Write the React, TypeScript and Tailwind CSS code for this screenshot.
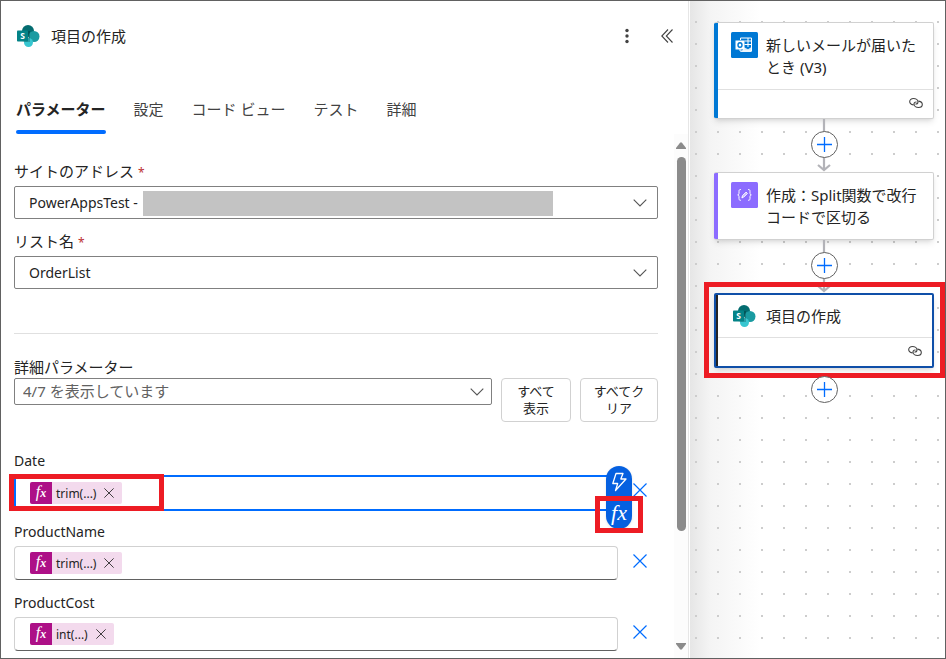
import React, { useState } from 'react';

const TABS = ['パラメーター', '設定', 'コード ビュー', 'テスト', '詳細'];

const SharePointIcon: React.FC = () => (
  <svg className="w-6 h-6 shrink-0" viewBox="0 0 24 24">
    <circle cx="12" cy="7" r="6" fill="#036c70" />
    <circle cx="18" cy="12.500" r="5.500" fill="#1a9ba1" />
    <circle cx="12.500" cy="18.500" r="4.500" fill="#37c6d0" />
    <path d="M7 7h7v11H8.200A6 6 0 0 1 7 7z" fill="#000" fillOpacity="0.200" />
    <rect x="1" y="6.500" width="11" height="11" rx="0.800" fill="#038387" />
    <text x="6.500" y="15" textAnchor="middle" fontSize="8.500" fontWeight="700" fill="#fff" fontFamily="Noto Sans, sans-serif">S</text>
  </svg>
);

const OutlookIcon: React.FC = () => (
  <svg className="w-[27px] h-[26px] shrink-0" viewBox="0 0 27 26">
    <rect width="27" height="26" rx="1.500" fill="#0078d4" />
    <path d="M9.500 8V6h11v13H9v-2M20.500 9H13.500M20.500 12.500h-7M17 6v9" fill="none" stroke="#fff" strokeWidth="1" />
    <path d="M12 15.500h1.500l3.500 1.800 3.500-2.300V20H9l3-2z" fill="#fff" fillOpacity="0.850" />
    <rect x="4.500" y="8.500" width="9" height="9" fill="#fff" />
    <ellipse cx="9" cy="13" rx="2" ry="2.300" fill="none" stroke="#0078d4" strokeWidth="1.400" />
  </svg>
);

const ComposeIcon: React.FC = () => (
  <svg className="w-[27px] h-[26px] shrink-0" viewBox="0 0 27 26" fill="none">
    <rect width="27" height="26" rx="1.500" fill="#8c6cff" />
    <g stroke="#fff" strokeWidth="1" strokeLinecap="round" strokeLinejoin="round">
      <path d="M9.500 7.500C8 7.500 8 8.300 8 9.300v2c0 1-.5 1.500-1.300 1.600.8.100 1.300.6 1.300 1.600v2c0 1 0 1.800 1.500 1.800" />
      <path d="M17.500 7.500c1.500 0 1.500.8 1.500 1.800v2c0 1 .5 1.500 1.300 1.600-.8.100-1.300.6-1.300 1.600v2c0 1 0 1.800-1.500 1.800" />
      <path d="M11 15.500l.5-1.800 3.600-3.600 1.300 1.300-3.600 3.600z" fill="#fff" fillOpacity="0.500" />
    </g>
  </svg>
);

const LinkIcon: React.FC = () => (
  <svg className="w-[14px] h-3" viewBox="0 0 14 12" fill="none" stroke="#444" strokeWidth="1.100" strokeLinecap="round">
    <path d="M4.300 7.900C2.200 7.500.7 6.200.7 4.500.7 2.700 2.300 1.500 4.400 1.500c2.500 0 4.600 1.500 4.600 3.500 0 1.200-.9 2-2.200 2" />
    <path d="M9.700 4.100c2.100.4 3.600 1.700 3.600 3.400 0 1.800-1.600 3-3.700 3C7.100 10.500 5 9 5 7c0-1.200.9-2 2.200-2" />
  </svg>
);

const CrossIcon: React.FC<{ className: string }> = ({ className }) => (
  <svg className={className} viewBox="0 0 14 14" fill="none" stroke="currentColor" strokeWidth="1.200">
    <path d="M0.500 0.500l13 13M13.500 0.500l-13 13" />
  </svg>
);

interface SelectFieldProps {
  id: string;
  value: string;
  className: string;
  chevronClassName?: string;
}

const SelectField: React.FC<SelectFieldProps> = ({ id, value, className, chevronClassName = 'right-[11px]' }) => (
  <>
    <select id={id} className={`w-full appearance-none rounded-[2px] border border-[#808080] bg-white ${className}`}>
      <option>{value}</option>
    </select>
    <svg className={`absolute top-1/2 -translate-y-1/2 w-[14px] h-2 pointer-events-none ${chevronClassName}`} viewBox="0 0 14 8" fill="none" stroke="#555" strokeWidth="1.100">
      <path d="M0.700 0.700L7 7l6.300-6.300" />
    </svg>
  </>
);

interface TokenFieldProps {
  id: string;
  label: string;
  token: string;
  active?: boolean;
}

const TokenField: React.FC<TokenFieldProps> = ({ id, label, token, active }) => (
  <div className="mb-[11px] last:mb-0">
    <label htmlFor={id} className="block text-sm leading-5 mb-1">{label}</label>
    <div className="h-9 flex items-start">
      <div
        className={`relative flex-1 flex items-center bg-white ${
          active ? 'h-9 pl-[14px] border-2 border-[#006cff]' : 'h-[34px] pl-[15px] border border-[#d1d1d1] border-b-[#616161] rounded'
        }`}
      >
        <span className="flex items-center h-[22px] rounded-[2px] bg-[#f3daed] text-xs shrink-0 overflow-hidden">
          <span className="w-[22px] h-full bg-[#ad1087] text-white text-center font-['Liberation_Serif',serif] italic text-base leading-5">
            f<span className="text-xs font-bold">x</span>
          </span>
          <span className="pl-1 pr-2 pt-[2px]">{token}</span>
          <button aria-label={`${token} を削除`} className="mr-2"><CrossIcon className="w-[10px] h-[10px]" /></button>
        </span>
        <input id={id} type="text" className="flex-1 min-w-0 h-full outline-none" />

        {active && (
          <>
            <div className="absolute -left-[7px] -top-[3px] w-[155px] h-[37px] border-[5px] border-[#ed1c24] pointer-events-none" />
            {/* Dynamic content / expression switcher */}
            <div className="absolute -right-4 -top-[11px] w-[26px] h-[63px] rounded-full bg-[#0560e0] text-white shadow flex flex-col z-10">
              <button aria-label="動的なコンテンツ" className="h-[31px] flex items-center justify-center">
                <svg className="w-4 h-5" viewBox="0 0 16 20" fill="none" stroke="#fff" strokeWidth="1.300" strokeLinejoin="round">
                  <path d="M5 1.500h7L9.800 7H15L4.500 18.500 6.700 11.500H1.800z" />
                </svg>
              </button>
              <button aria-label="式" className="h-8 font-['Liberation_Serif',serif] italic text-[22px] leading-8">fx</button>
              <div className="absolute -left-[11px] top-[30px] w-12 h-[37px] border-[5px] border-[#ed1c24] pointer-events-none" />
            </div>
          </>
        )}
      </div>
      <button aria-label={`${label} をクリア`} className="ml-1 w-9 h-[30px] flex items-center justify-center text-[#006cff]">
        <CrossIcon className="w-[14px] h-[14px]" />
      </button>
    </div>
  </div>
);

const AddButton: React.FC = () => (
  <button aria-label="新しいアクションを追加" className="relative w-[27px] h-[27px] rounded-full border border-[#616161] bg-white flex items-center justify-center">
    <svg className="w-[15px] h-[15px]" viewBox="0 0 15 15" stroke="#006cff" strokeWidth="1.300">
      <path d="M7.500 0v15M0 7.500h15" />
    </svg>
  </button>
);

const Connector: React.FC = () => (
  <div className="relative h-[53px] pt-3 flex items-start justify-center">
    <svg className="absolute left-1/2 -translate-x-1/2 top-0 w-4 h-[53px]" viewBox="0 0 16 53" fill="none" stroke="#b3b3b8" strokeWidth="2.200">
      <path d="M8 0v51M2 46l6 5 6-5" />
    </svg>
    <AddButton />
  </div>
);

interface NodeCardProps {
  icon: React.ReactNode;
  title: string;
  accent: string;
  linked?: boolean;
  selected?: boolean;
}

const NodeCard: React.FC<NodeCardProps> = ({ icon, title, accent, linked, selected }) => (
  <div className={`relative flex rounded-[2px] bg-white overflow-hidden shadow-md ${selected ? 'border-2 border-[#0f4fa8]' : 'border border-l-0 border-[#d1d1d1]'}`}>
    <div className={`shrink-0 ${accent}`} />
    <div className="flex-1">
      <div className={`flex pt-[9px] pr-2 text-[15px] leading-[22px] ${selected ? 'items-center gap-[10px] pl-[14px] pb-[9px]' : 'items-start gap-2 pl-[13px] pb-[11px]'}`}>
        {icon}
        <span className={selected ? '' : 'pt-[2px]'}>{title}</span>
      </div>
      {linked && (
        <div className="h-[29px] border-t border-[#e0e0e0] flex items-center justify-end pr-[10px] pb-[3px]">
          <LinkIcon />
        </div>
      )}
    </div>
  </div>
);

const App: React.FC = () => {
  const [activeTab, setActiveTab] = useState(TABS[0]);

  return (
    <div className="min-h-screen flex border border-[#616161] bg-white text-[#242424] font-['Noto_Sans','Noto_Sans_CJK_JP',sans-serif]">
      {/* Settings panel */}
      <div className="flex-1 min-w-0 flex flex-col border-r border-[#e6e6e6]">
        <header className="h-[70px] flex items-center pl-[15px] pr-[15px]">
          <SharePointIcon />
          <h1 className="flex-1 pl-[11px] text-[15px]">項目の作成</h1>
          <button aria-label="その他" className="w-5 h-6 mr-6 flex items-center justify-center">
            <svg className="w-1 h-4" viewBox="0 0 4 16" fill="#424242">
              <circle cx="2" cy="2.500" r="1.700" />
              <circle cx="2" cy="8" r="1.700" />
              <circle cx="2" cy="13.500" r="1.700" />
            </svg>
          </button>
          <button aria-label="折りたたむ" className="h-6 flex items-center">
            <svg className="w-3 h-[14px]" viewBox="0 0 12 14" fill="none" stroke="#424242" strokeWidth="1.100">
              <path d="M7 0.500L0.800 7 7 13.500M11.500 0.500L5.300 7l6.200 6.500" />
            </svg>
          </button>
        </header>

        <div role="tablist" className="mt-[26px] pl-[15px] flex gap-7">
          {TABS.map(tab => (
            <button
              key={tab}
              role="tab"
              aria-selected={tab === activeTab}
              onClick={() => setActiveTab(tab)}
              className={`flex flex-col text-[15px] leading-6 whitespace-nowrap ${tab === activeTab ? 'font-bold' : 'text-[#424242]'}`}
            >
              {tab}
              <span className={`mt-[9px] h-1 w-full rounded-full ${tab === activeTab ? 'bg-[#006cff]' : ''}`} />
            </button>
          ))}
        </div>

        <div className="flex-1 flex">
          <div className="flex-1 min-w-0 pt-[27px] pl-[13px] pr-4">
            <label htmlFor="site" className="block text-[15px] leading-5 mb-[5px]">
              サイトのアドレス <span className="text-xs text-[#bc2f32]">*</span>
            </label>
            <div className="relative mb-3">
              <SelectField id="site" value="PowerAppsTest -" className="h-[33px] pl-[14px] text-sm" />
              <div className="absolute left-[129px] right-[105px] top-[5px] bottom-[3px] bg-[#c3c3c3]" />
            </div>

            <label htmlFor="list" className="block text-[15px] leading-5 mb-[5px]">
              リスト名 <span className="text-xs text-[#bc2f32]">*</span>
            </label>
            <div className="relative">
              <SelectField id="list" value="OrderList" className="h-[33px] pl-[14px] text-sm" />
            </div>

            <hr className="mt-11 border-[#e0e0e0]" />

            <label htmlFor="advanced" className="block mt-[23px] mb-px text-[15px] leading-5">詳細パラメーター</label>
            <div className="flex items-start gap-[9px] mb-[29px]">
              <div className="relative flex-1">
                <SelectField id="advanced" value="4/7 を表示しています" className="h-[27px] pl-2 text-[15px] text-[#616161]" chevronClassName="right-2" />
              </div>
              <button className="w-[70px] h-11 px-3 rounded border border-[#d1d1d1] text-[13px] leading-[17px]">すべて<br />表示</button>
              <button className="w-[78px] h-11 px-3 rounded border border-[#d1d1d1] text-[13px] leading-[17px]">すべてクリア</button>
            </div>

            <TokenField id="date" label="Date" token="trim(...)" active />
            <TokenField id="product-name" label="ProductName" token="trim(...)" />
            <TokenField id="product-cost" label="ProductCost" token="int(...)" />
          </div>

          {/* Scrollbar */}
          <div className="w-[14px] shrink-0 bg-[#fcfcfc] flex flex-col items-center pt-2 pb-2">
            <svg className="w-[10px] h-[7px]" viewBox="0 0 10 7" fill="#8b8b8b"><path d="M4.200 0.500h1.600L10 6v1H0V6z" /></svg>
            <div className="flex-1 w-full pt-2 flex justify-center">
              <div className="w-[9px] h-[77%] rounded-full bg-[#8b8b8b]" />
            </div>
            <svg className="w-[10px] h-[7px]" viewBox="0 0 10 7" fill="#8b8b8b"><path d="M4.200 6.500h1.600L10 1V0H0v1z" /></svg>
          </div>
        </div>
      </div>

      {/* Flow canvas */}
      <div className="ml-px w-[255px] shrink-0 bg-[radial-gradient(circle_at_6px_10px,#cdcdcd_1px,transparent_1px),linear-gradient(to_right,#e6e6e6,#f4f4f4_20px,#ffffff_70px)] bg-[size:22px_22px,100%_100%] bg-[position:0_11px,0_0] pt-[21px] pl-6 pr-[11px]">
        <NodeCard icon={<OutlookIcon />} title="新しいメールが届いたとき (V3)" accent="w-1 bg-[#0078d4]" linked />
        <Connector />
        <NodeCard icon={<ComposeIcon />} title="作成：Split関数で改行コードで区切る" accent="w-1 bg-[#8c6cff]" />
        <Connector />
        <div className="relative">
          <NodeCard icon={<SharePointIcon />} title="項目の作成" accent="w-[2px] bg-[#242424]" linked selected />
          <div className="absolute -left-[10px] -right-[11px] -top-[11px] -bottom-[10px] border-[5px] border-[#ed1c24] pointer-events-none" />
        </div>
        <div className="mt-2 flex justify-center">
          <AddButton />
        </div>
      </div>
    </div>
  );
};

export default App;
